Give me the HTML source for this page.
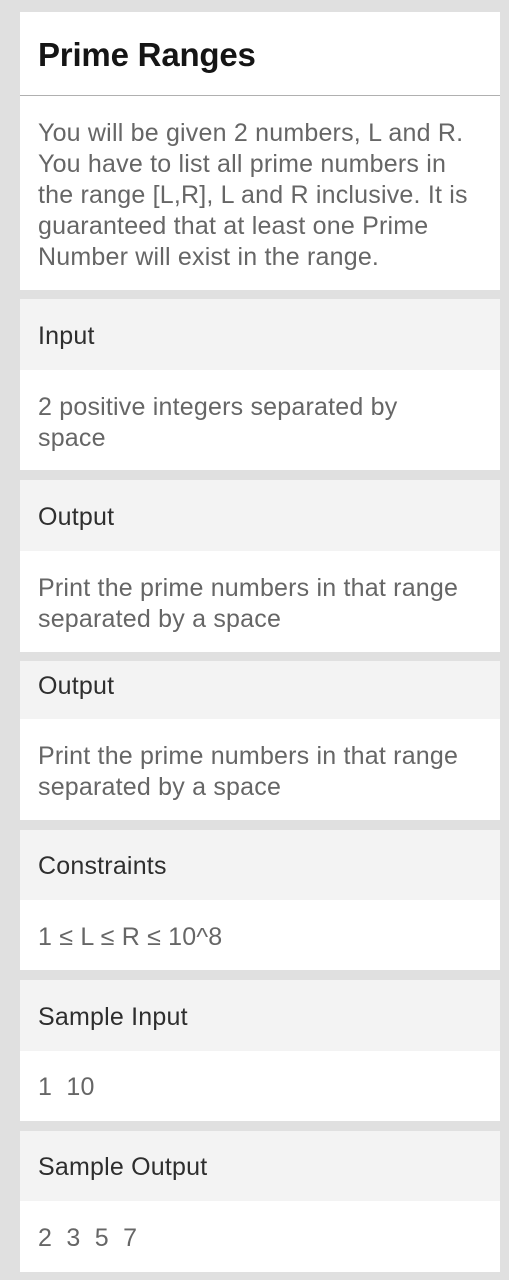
<!DOCTYPE html>
<html><head><style>
body{margin:0;width:509px;height:1280px;background:#e0e0e0;position:relative;overflow:hidden;font-family:"Liberation Sans",sans-serif}
.b{position:absolute;left:20px;width:480px;box-sizing:border-box}
.w{background:#fff}
.g{background:#f3f3f3}
.t{position:absolute;left:38px;white-space:nowrap;font-size:25px;line-height:31px;letter-spacing:0.2px;margin-top:1px}
.h{color:#2e2e2e}
.p{color:#666}
</style></head><body>
<div class="b w" style="top:12px;height:83px"></div>
<div class="b" style="top:95px;height:1px;background:#b0b0b0"></div>
<div class="b w" style="top:96px;height:194px"></div>
<div class="t h" style="top:38px;font-size:33px;font-weight:bold;color:#151515;letter-spacing:-0.2px">Prime Ranges</div>
<div class="t p" style="top:117px">You will be given 2 numbers, L and R.<br>You have to list all prime numbers in<br>the range [L,R], L and R inclusive. It is<br>guaranteed that at least one Prime<br>Number will exist in the range.</div>

<div class="b g" style="top:299px;height:71px"></div>
<div class="b w" style="top:370px;height:100px"></div>
<div class="t h" style="top:320px">Input</div>
<div class="t p" style="top:391px">2 positive integers separated by<br>space</div>

<div class="b g" style="top:480px;height:71px"></div>
<div class="b w" style="top:551px;height:101px"></div>
<div class="t h" style="top:501px">Output</div>
<div class="t p" style="top:572px">Print the prime numbers in that range<br>separated by a space</div>

<div class="b g" style="top:661px;height:58px"></div>
<div class="b w" style="top:719px;height:101px"></div>
<div class="t h" style="top:670px">Output</div>
<div class="t p" style="top:740px">Print the prime numbers in that range<br>separated by a space</div>

<div class="b g" style="top:830px;height:70px"></div>
<div class="b w" style="top:900px;height:70px"></div>
<div class="t h" style="top:850px">Constraints</div>
<div class="t p" style="top:921px">1 ≤ L ≤ R ≤ 10^8</div>

<div class="b g" style="top:980px;height:71px"></div>
<div class="b w" style="top:1051px;height:70px"></div>
<div class="t h" style="top:1001px">Sample Input</div>
<div class="t p" style="top:1071px">1&nbsp;&nbsp;10</div>

<div class="b g" style="top:1131px;height:70px"></div>
<div class="b w" style="top:1201px;height:71px"></div>
<div class="t h" style="top:1151px">Sample Output</div>
<div class="t p" style="top:1222px">2&nbsp;&nbsp;3&nbsp;&nbsp;5&nbsp;&nbsp;7</div>
</body></html>
